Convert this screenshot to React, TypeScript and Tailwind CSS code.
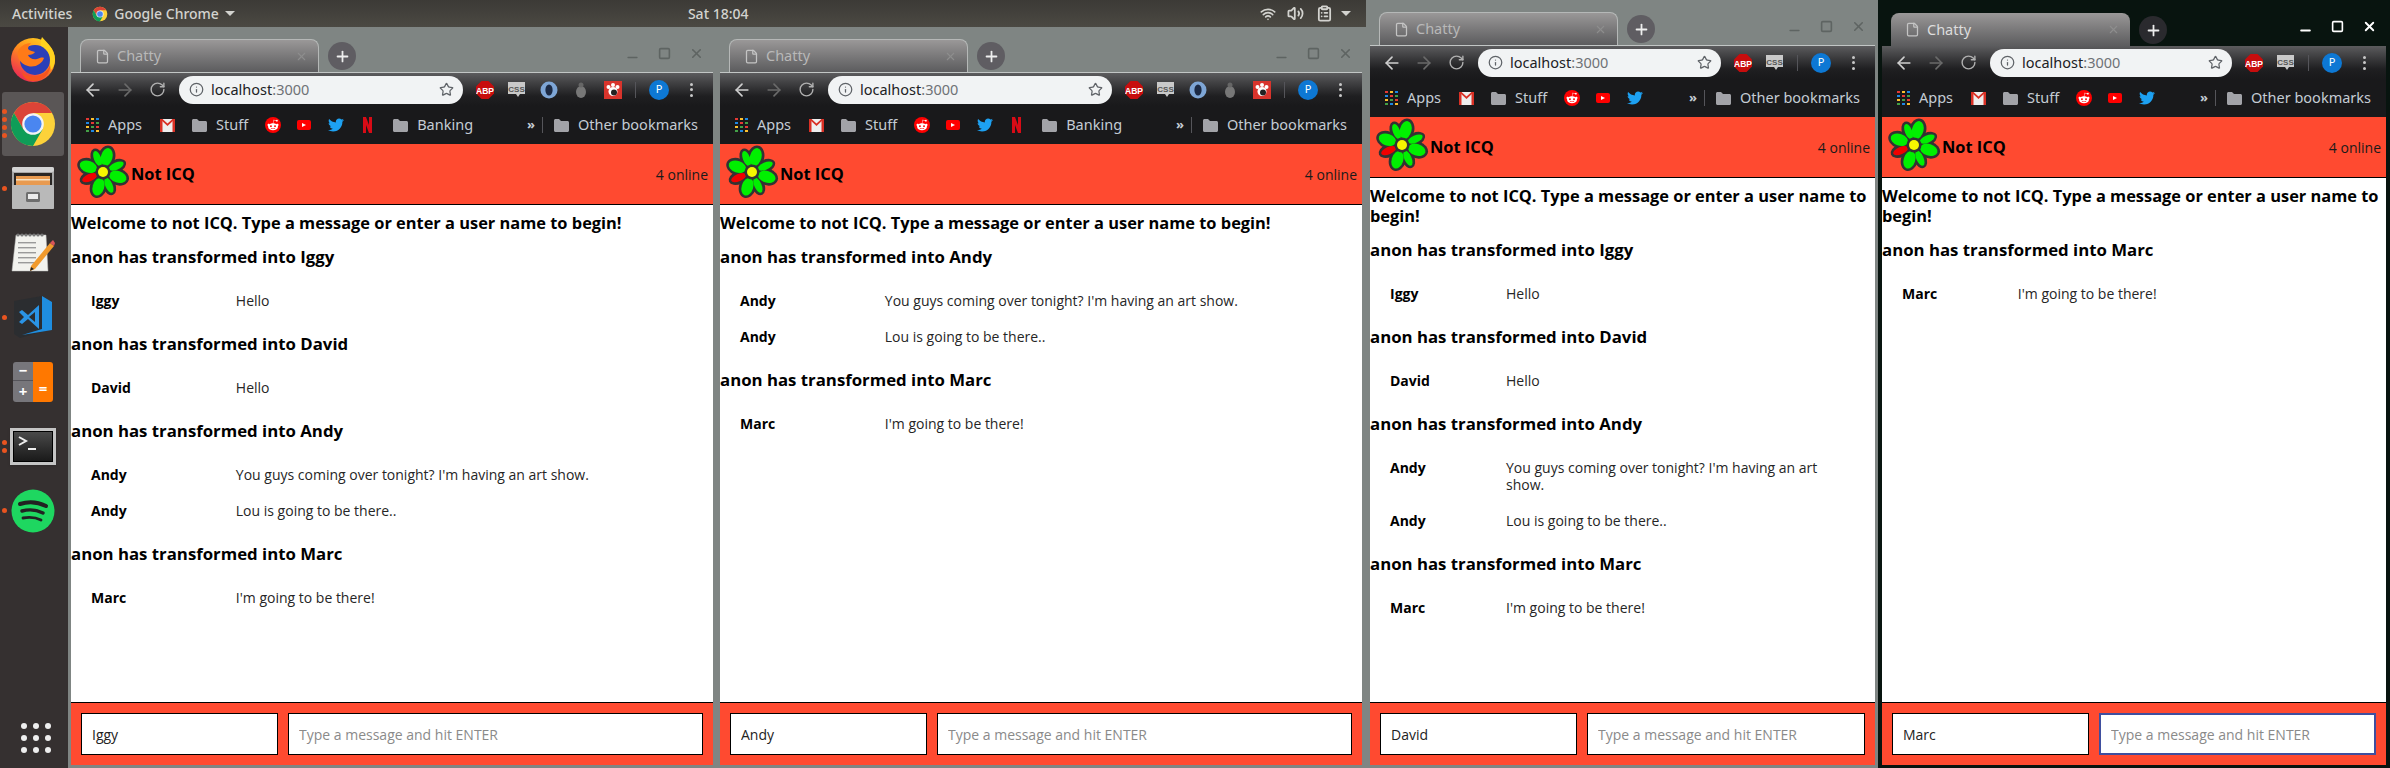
import React from 'react';
import { ArrowLeft, ArrowRight, RotateCw, Star, Info, File, X, Plus, Minus, Square, Wifi, Volume2, ClipboardList } from 'lucide-react';
import { FaTwitter, FaRedditAlien } from 'react-icons/fa';

type Group = { title: string; rows: { name: string; text: string }[] };

const iggyThread: Group[] = [
  { title: 'anon has transformed into Iggy', rows: [{ name: 'Iggy', text: 'Hello' }] },
  { title: 'anon has transformed into David', rows: [{ name: 'David', text: 'Hello' }] },
  {
    title: 'anon has transformed into Andy',
    rows: [
      { name: 'Andy', text: "You guys coming over tonight? I'm having an art show." },
      { name: 'Andy', text: 'Lou is going to be there..' },
    ],
  },
  { title: 'anon has transformed into Marc', rows: [{ name: 'Marc', text: "I'm going to be there!" }] },
];

const andyThread: Group[] = iggyThread.slice(2);
const marcThread: Group[] = iggyThread.slice(3);

const petals: [number, boolean, string][] = [
  [-22, false, '#00f000'],
  [14, true, '#00f000'],
  [66, false, '#00f000'],
  [108, true, '#00f000'],
  [156, false, '#00f000'],
  [197, true, '#00f000'],
  [247, false, '#f00000'],
  [290, true, '#00f000'],
];

// ICQ flower
function Flower() {
  return (
    <svg width="56" height="56" viewBox="-28 -28 56 56" className="shrink-0 -mt-[5px]">
      {petals.map(([angle, big], i) => (
        <ellipse key={i} cx="0" cy={big ? -15.5 : -14.5} rx={big ? 8.5 : 6.5} ry={big ? 11.5 : 10.5} fill="#333" transform={`rotate(${angle})`} />
      ))}
      {petals.map(([angle, big, color], i) => (
        <ellipse key={i} cx="0" cy={big ? -15.5 : -14.5} rx={big ? 5.8 : 3.6} ry={big ? 9 : 8} fill={color} transform={`rotate(${angle})`} />
      ))}
      <circle r="7.5" fill="#333" />
      <circle r="5" fill="#f6f600" />
    </svg>
  );
}

function ChromeLogo({ size }: { size: number }) {
  return (
    <svg width={size} height={size} viewBox="0 0 24 24">
      <circle cx="12" cy="12" r="11" fill="#fdd23a" />
      <path d="M2.47 6.5A11 11 0 0 1 21.53 6.5L12 6.5 7.24 14.75Z" fill="#db4437" />
      <path d="M2.47 6.5A11 11 0 0 0 12 23L16.76 14.75 7.24 14.75Z" fill="#0f9d58" />
      <circle cx="12" cy="12" r="5.4" fill="#f4f4f4" />
      <circle cx="12" cy="12" r="4.3" fill="#4a86f0" />
    </svg>
  );
}

function Firefox() {
  return (
    <svg width="48" height="48" viewBox="0 0 48 48">
      <defs>
        <linearGradient id="ffBody" x1="0.8" y1="0" x2="0.2" y2="1">
          <stop offset="0" stopColor="#ffd21f" />
          <stop offset="0.45" stopColor="#ff8a1e" />
          <stop offset="1" stopColor="#e8205a" />
        </linearGradient>
      </defs>
      <circle cx="24" cy="25" r="22" fill="url(#ffBody)" />
      <path d="M33 2c5 6 13 12 13 23 0 4-2 8-4 10-1-8-3-14-9-20-2-4-2-9 0-13z" fill="#ffd21f" />
      <circle cx="26" cy="25" r="15" fill="#2b3fb8" />
      <path d="M10 14c3-4 7-6 12-6-2 2-3 4-3 6 2 2 5 2 7 3-1 2-4 3-7 3 1 3 5 5 9 4 3-1 5-2 7-1-2 6-9 10-16 8-8-2-13-10-9-17z" fill="#ff7a18" />
      <path d="M13 37c5 5 15 6 22 1 3-2 5-5 6-8 1 9-8 17-18 16-5 0-9-4-10-9z" fill="#f5541f" />
    </svg>
  );
}

function FilesIcon() {
  return (
    <svg width="44" height="44" viewBox="0 0 44 44">
      <rect x="1" y="1" width="42" height="42" rx="2" fill="#a8a8a8" />
      <rect x="1" y="1" width="42" height="5" rx="2" fill="#d4d4d4" />
      <rect x="3" y="7" width="38" height="12" fill="#2a2624" />
      <rect x="5" y="10" width="34" height="9" fill="#e89a50" />
      <rect x="5" y="13" width="34" height="1.5" fill="#f6e2c4" />
      <rect x="1" y="19" width="42" height="24" rx="1" fill="#b9b9b9" />
      <rect x="15" y="26" width="14" height="10" rx="1.5" fill="#6e6e6e" />
      <rect x="17" y="28" width="10" height="5" fill="#ececec" />
    </svg>
  );
}

function NotepadIcon() {
  return (
    <svg width="46" height="44" viewBox="0 0 46 44">
      <path d="M6 4h30l2 36H2z" fill="#f2f2ee" stroke="#bbb" strokeWidth="0.5" />
      {[8, 12, 16, 20, 24, 28, 32].map(x => (
        <circle key={x} cx={x} cy="4" r="1.6" fill="#777" />
      ))}
      {[11, 16, 21, 26, 31].map(y => (
        <rect key={y} x="8" y={y} width="18" height="1.4" fill="#9a9a9a" />
      ))}
      <path d="M21 35l-1 5 5-2 19-23-4-3z" fill="#f19a2c" />
      <path d="M40 12l4 3 1-3-2-3z" fill="#d9545a" />
      <path d="M20 40l1-4 3 2z" fill="#222" />
    </svg>
  );
}

function VsCodeIcon() {
  return (
    <svg width="42" height="44" viewBox="0 0 42 44">
      <path d="M2 6l28-5 10 7v26L8 43l-6-4z" fill="#2b2d30" />
      <path d="M30 1l10 6v28l-30 5 20-6z" fill="#1f8ee0" />
      <path d="M7 17l3-2 6 5 11-10v24L16 24l-6 5-3-2 5-5z" fill="#2a94e6" />
      <path d="M23 17l-6 5 6 5z" fill="#2b2d30" />
    </svg>
  );
}

function CalcIcon() {
  return (
    <div className="w-[40px] h-[40px] rounded-[3px] overflow-hidden flex">
      <div className="w-[20px] flex flex-col bg-[#77767b] text-white text-[15px] font-bold leading-none">
        <div className="h-[19px] flex items-center justify-center border-b border-[#55545a]">−</div>
        <div className="flex-1 flex items-center justify-center">+</div>
      </div>
      <div className="flex-1 bg-[#ff7800] text-white text-[15px] font-bold flex items-end justify-center pb-[6px] leading-none">=</div>
    </div>
  );
}

function TerminalIcon() {
  return (
    <div className="w-[46px] h-[37px] bg-[#c4c4c4] p-[3px] shadow-sm">
      <div className="w-full h-full bg-gradient-to-b from-[#4a4a4a] to-[#1a1a1a] border border-black pl-[3px] pt-[2px]">
        <svg width="22" height="20" viewBox="0 0 22 20">
          <path d="M2 3l7 4-7 4" fill="none" stroke="#eee" strokeWidth="2" />
          <rect x="11" y="14" width="8" height="2" fill="#eee" />
        </svg>
      </div>
    </div>
  );
}

function SpotifyIcon() {
  return (
    <svg width="44" height="44" viewBox="0 0 44 44">
      <circle cx="22" cy="22" r="21.5" fill="#1ed760" />
      <path d="M9 15c9-3 18-2 26 2" fill="none" stroke="#222" strokeWidth="4" strokeLinecap="round" />
      <path d="M11 22c7-2 15-1 21 2" fill="none" stroke="#222" strokeWidth="3.4" strokeLinecap="round" />
      <path d="M12 29c6-1 12-1 18 2" fill="none" stroke="#222" strokeWidth="2.8" strokeLinecap="round" />
    </svg>
  );
}

function DockItem({ dots = 0, active = false, children }: { dots?: number; active?: boolean; children: React.ReactNode }) {
  return (
    <div className={`h-[64.5px] w-[62px] ml-[2px] relative flex items-center justify-center rounded-[3px] ${active ? 'bg-[#5a5656]' : ''}`}>
      {dots > 0 && (
        <div className="absolute left-0 top-0 bottom-0 w-[6px] flex flex-col justify-center gap-[3px]">
          {Array.from({ length: dots }).map((_, i) => (
            <div key={i} className="w-[5px] h-[5px] rounded-full bg-[#e95420]" />
          ))}
        </div>
      )}
      {children}
    </div>
  );
}

function Dock() {
  return (
    <div className="w-[68px] shrink-0 bg-[#353030] flex flex-col">
      <DockItem><Firefox /></DockItem>
      <DockItem dots={4} active><ChromeLogo size={48} /></DockItem>
      <DockItem dots={1}><FilesIcon /></DockItem>
      <DockItem><NotepadIcon /></DockItem>
      <DockItem dots={1}><VsCodeIcon /></DockItem>
      <DockItem><CalcIcon /></DockItem>
      <DockItem dots={2}><TerminalIcon /></DockItem>
      <DockItem dots={1}><SpotifyIcon /></DockItem>
      <div className="mt-auto mb-[15px] ml-[21px] grid grid-cols-3 w-[30px] gap-y-[6px] gap-x-[6px]">
        {Array.from({ length: 9 }).map((_, i) => (
          <div key={i} className="w-[6px] h-[6px] rounded-full bg-[#eeeeee]" />
        ))}
      </div>
    </div>
  );
}

function TopBar() {
  return (
    <div className="h-[27px] shrink-0 bg-gradient-to-b from-[#3c3a36] to-[#4b4943] flex items-center text-[#d3d3cf] text-[14px] font-medium font-['Noto_Sans',sans-serif] relative">
      <span className="ml-[12px]">Activities</span>
      <span className="ml-[20px]"><ChromeLogo size={16} /></span>
      <span className="ml-[6px]">Google Chrome</span>
      <div className="ml-[6px] w-0 h-0 border-x-[5px] border-x-transparent border-t-[5px] border-t-[#d3d3cf]" />
      <span className="ml-[453px]">Sat 18:04</span>
      <div className="ml-auto mr-[15px] flex items-center">
        <Wifi size={16} strokeWidth={2.5} />
        <Volume2 size={17} strokeWidth={2.5} className="ml-[11px]" />
        <ClipboardList size={17} strokeWidth={2.5} className="ml-[12px]" />
        <div className="ml-[8px] w-0 h-0 border-x-[5px] border-x-transparent border-t-[5px] border-t-[#d3d3cf]" />
      </div>
    </div>
  );
}

function Ext({ kind }: { kind: 'abp' | 'css' | 'ring' | 'bug' | 'paw' }) {
  return (
    <div className="w-[32px] flex justify-center items-center">
      {kind === 'abp' && (
        <svg width="18" height="18" viewBox="0 0 18 18">
          <path d="M5.5 0h7L18 5.500v7L12.500 18h-7L0 12.500v-7z" fill="#c70d0d" />
          <text x="9" y="12.500" textAnchor="middle" fontSize="8.500" fontWeight="700" fill="#fff" fontFamily="Liberation Sans, sans-serif">ABP</text>
        </svg>
      )}
      {kind === 'css' && (
        <svg width="18" height="18" viewBox="0 0 18 18">
          <path d="M0 1h17v12h-5l-2 3-2-3H0z" fill="#c9c9c9" />
          <text x="8.500" y="10.500" textAnchor="middle" fontSize="8" fontWeight="700" fill="#555" fontFamily="Liberation Sans, sans-serif">CSS</text>
        </svg>
      )}
      {kind === 'ring' && (
        <svg width="18" height="18" viewBox="0 0 18 18">
          <circle cx="9" cy="9" r="8.500" fill="#7ea6d6" />
          <ellipse cx="9" cy="9" rx="3.600" ry="5.500" fill="#1c2a44" />
        </svg>
      )}
      {kind === 'bug' && (
        <svg width="18" height="18" viewBox="0 0 18 18">
          <ellipse cx="9" cy="11" rx="5" ry="6" fill="#777" />
          <circle cx="9" cy="4" r="2.500" fill="#666" />
        </svg>
      )}
      {kind === 'paw' && (
        <svg width="18" height="18" viewBox="0 0 18 18">
          <rect width="18" height="18" fill="#d8342c" />
          <circle cx="9" cy="10.500" r="4.500" fill="#fff" />
          <circle cx="4.500" cy="6" r="2" fill="#fff" />
          <circle cx="9" cy="4" r="2" fill="#fff" />
          <circle cx="13.500" cy="6" r="2" fill="#fff" />
          <circle cx="10" cy="11.500" r="3" fill="#222" />
        </svg>
      )}
    </div>
  );
}

function FolderIcon() {
  return (
    <svg width="15" height="13" viewBox="0 0 15 13" className="shrink-0">
      <path d="M0 1.500C0 .7.700 0 1.500 0H5l2 2h6.500c.8 0 1.500.7 1.500 1.500v8c0 .8-.7 1.500-1.500 1.500h-12C.7 13 0 12.300 0 11.500z" fill="#a2a3a8" />
    </svg>
  );
}

function AppsIcon() {
  const colors = ['#e53935', '#fbc02d', '#1e88e5', '#1e88e5', '#e53935', '#43a047', '#fbc02d', '#43a047', '#e53935', '#43a047', '#1e88e5', '#fbc02d'];
  return (
    <div className="grid grid-cols-3 gap-[1.5px] w-[13px] shrink-0">
      {colors.map((c, i) => (
        <div key={i} className="w-[3px] h-[2.600px]" style={{ backgroundColor: c }} />
      ))}
    </div>
  );
}

function GmailIcon() {
  return (
    <svg width="15" height="13" viewBox="0 0 15 13" className="shrink-0">
      <rect width="15" height="13" fill="#eee" />
      <path d="M0 0h2.500v13H0zM12.500 0H15v13h-2.500z" fill="#d93025" />
      <path d="M0 0h2.500l5 4.500L12.500 0H15L7.500 7z" fill="#d93025" />
    </svg>
  );
}

function BookmarkBar({ full }: { full: boolean }) {
  return (
    <div className="h-[38px] shrink-0 bg-[#19191b] flex items-center text-[14.500px] text-[#c4ccd4] font-['Noto_Sans',sans-serif] pl-[15px] pr-[15px]">
      <AppsIcon />
      <span className="ml-[9px]">Apps</span>
      <span className="ml-[18px]"><GmailIcon /></span>
      <span className="ml-[17px]"><FolderIcon /></span>
      <span className="ml-[9px]">Stuff</span>
      <div className="ml-[17px] w-[16px] h-[16px] rounded-full bg-[#f00] flex items-center justify-center shrink-0">
        <FaRedditAlien size={12} color="#fff" />
      </div>
      <div className="ml-[16px] w-[14px] h-[10px] rounded-[2px] bg-[#f00] flex items-center justify-center shrink-0">
        <div className="w-0 h-0 border-y-[2.500px] border-y-transparent border-l-[4px] border-l-white" />
      </div>
      <span className="ml-[17px]"><FaTwitter size={16} color="#1da1f2" /></span>
      {full && (
        <>
          <svg width="9" height="16" viewBox="0 0 9 16" className="ml-[19px] shrink-0">
            <path d="M0 0h3l3 8V0h3v16H6L3 8v8H0z" fill="#d80b16" />
          </svg>
          <span className="ml-[21px]"><FolderIcon /></span>
          <span className="ml-[9px]">Banking</span>
        </>
      )}
      <div className="ml-auto flex items-center">
        <span className="text-[13px] font-bold mr-[7px]">»</span>
        <div className="w-px h-[16px] bg-[#55555a]" />
        <span className="ml-[11px]"><FolderIcon /></span>
        <span className="ml-[9px]">Other bookmarks</span>
      </div>
    </div>
  );
}

function Toolbar({ exts }: { exts: ('abp' | 'css' | 'ring' | 'bug' | 'paw')[] }) {
  return (
    <div className="h-[33px] shrink-0 bg-gradient-to-b from-[#5c5c5e] via-[#1f1f21] via-70% to-[#19191b] flex items-center pl-[6px]">
      <div className="w-[32px] flex justify-center"><ArrowLeft size={20} color="#cfcfcf" /></div>
      <div className="w-[32px] flex justify-center"><ArrowRight size={20} color="#6a6a6a" /></div>
      <div className="w-[32px] flex justify-center"><RotateCw size={17} color="#b0b0b0" /></div>
      <div className="ml-[6px] flex-1 h-[28px] rounded-full bg-[#f1f3f4] flex items-center pl-[10px] pr-[9px] text-[14.500px] font-['Noto_Sans',sans-serif]">
        <Info size={15} color="#5f6368" />
        <span className="ml-[7px] text-[#202124]">localhost</span>
        <span className="text-[#6e7276]">:3000</span>
        <Star size={15} color="#5f6368" className="ml-auto" />
      </div>
      <div className="ml-[6px] flex items-center">
        {exts.map((e, i) => (
          <Ext key={i} kind={e} />
        ))}
      </div>
      <div className="ml-[6px] w-px h-[16px] bg-[#55555a]" />
      <div className="ml-[13px] w-[20px] h-[20px] rounded-full bg-[#0d78d4] text-white text-[11px] flex items-center justify-center font-['Noto_Sans',sans-serif]">P</div>
      <div className="ml-[21px] mr-[20px] flex flex-col gap-[2.500px]">
        <div className="w-[3px] h-[3px] rounded-full bg-[#c8c8c8]" />
        <div className="w-[3px] h-[3px] rounded-full bg-[#c8c8c8]" />
        <div className="w-[3px] h-[3px] rounded-full bg-[#c8c8c8]" />
      </div>
    </div>
  );
}

function TabStrip({ active }: { active: boolean }) {
  const ctl = active ? '#ffffff' : '#5e6462';
  return (
    <div className={`h-[45px] shrink-0 flex items-end ${active ? '' : 'border-b border-[#c2c6c5]'}`}>
      <div className={`ml-[9px] w-[239px] h-[33px] rounded-t-[8px] bg-gradient-to-b from-[#9a9898] to-[#5c5c5e] flex items-center pl-[14px] pr-[10px] font-['Noto_Sans',sans-serif] text-[14.500px] ${active ? 'text-[#dddddd]' : 'text-[#b8b8b8] border border-b-0 border-[#b5b8b7]'}`}>
        <File size={15} color="#c4c4c4" />
        <span className="ml-[7px]">Chatty</span>
        <X size={13} color="#8e8e8e" className="ml-auto" />
      </div>
      <div className={`ml-[9px] mb-[2px] w-[28px] h-[28px] rounded-full flex items-center justify-center ${active ? 'bg-[#2a2a2e]' : 'bg-[#5f5d62]'}`}>
        <Plus size={17} color="#eeeeee" strokeWidth={2.5} />
      </div>
      <div className="ml-auto flex items-center self-start mt-[16px] h-[18px]">
        <div className="w-[32px] flex justify-center"><Minus size={15} color={ctl} strokeWidth={active ? 3 : 2.5} className="mt-[8px]" /></div>
        <div className="w-[32px] flex justify-center"><Square size={13} color={ctl} strokeWidth={3} /></div>
        <div className="w-[32px] flex justify-center"><X size={15} color={ctl} strokeWidth={active ? 3 : 2.5} /></div>
        <div className="w-[1px]" />
      </div>
    </div>
  );
}

function Row({ name, text }: { name: string; text: string }) {
  return (
    <div className="flex py-[9.500px] text-[14px] leading-[17px]">
      <div className="w-[calc(21%+30px)] shrink-0 pl-[20px] font-bold text-black">{name}</div>
      <div className="flex-1 pr-[20px] text-[#262626]">{text}</div>
    </div>
  );
}

function ChatWindow({ name, thread, active = false, exts, full, pad }: {
  name: string;
  thread: Group[];
  active?: boolean;
  exts: ('abp' | 'css' | 'ring' | 'bug' | 'paw')[];
  full: boolean;
  pad: string;
}) {
  return (
    <div className={`flex flex-col flex-1 h-full pb-[3px] pt-px ${pad} ${active ? 'bg-[#08140f]' : 'bg-[#7f8583]'}`}>
      <TabStrip active={active} />
      <Toolbar exts={exts} />
      <BookmarkBar full={full} />
      <div className="h-[61px] shrink-0 bg-[#ff4a30] border-b border-black flex items-center justify-between pl-[4px] pr-[5px]">
        <div className="flex items-center">
          <Flower />
          <span className="text-[16.400px] font-bold text-black">Not ICQ</span>
        </div>
        <span className="text-[14px] text-[#1a1a1a]">4 online</span>
      </div>
      <div className="flex-1 bg-white pt-[8px] text-black overflow-hidden">
        <div className="text-[16.400px] leading-[20px] font-bold mb-[14px]">Welcome to not ICQ. Type a message or enter a user name to begin!</div>
        {thread.map((g, i) => (
          <div key={i} className="mb-[16px]">
            <div className="text-[16.800px] leading-[20px] font-bold mb-[15px]">{g.title}</div>
            {g.rows.map((r, j) => (
              <Row key={j} name={r.name} text={r.text} />
            ))}
          </div>
        ))}
      </div>
      <div className="h-[63px] shrink-0 bg-[#ff4a30] border-t border-black flex items-center gap-[10px] px-[10px]">
        <input
          readOnly
          defaultValue={name}
          className="w-[197px] h-[42px] shrink-0 bg-white border border-black px-[10px] text-[14px] text-[#222] outline-none"
        />
        <input
          readOnly
          placeholder="Type a message and hit ENTER"
          className={`flex-1 min-w-0 h-[42px] bg-white px-[10px] text-[14px] outline-none placeholder:text-[#8a8a8a] ${active ? 'border-2 border-[#3f4f9f]' : 'border border-black'}`}
        />
      </div>
    </div>
  );
}

export default function App() {
  return (
    <div className="w-[2390px] h-[768px] overflow-hidden flex bg-[#2c2a28] font-['Open_Sans',sans-serif]">
      <div className="w-[1366px] shrink-0 flex flex-col">
        <TopBar />
        <div className="flex-1 flex min-h-0">
          <Dock />
          <ChatWindow name="Iggy" thread={iggyThread} exts={['abp', 'css', 'ring', 'bug', 'paw']} full pad="pl-[3px] pr-[4px]" />
          <ChatWindow name="Andy" thread={andyThread} exts={['abp', 'css', 'ring', 'bug', 'paw']} full pad="pl-[3px] pr-[4px]" />
        </div>
      </div>
      <div className="w-[512px] shrink-0 flex">
        <ChatWindow name="David" thread={iggyThread} exts={['abp', 'css']} full={false} pad="pl-[4px] pr-[3px]" />
      </div>
      <div className="w-[512px] shrink-0 flex">
        <ChatWindow name="Marc" thread={marcThread} exts={['abp', 'css']} full={false} active pad="pl-[4px] pr-[4px]" />
      </div>
    </div>
  );
}
